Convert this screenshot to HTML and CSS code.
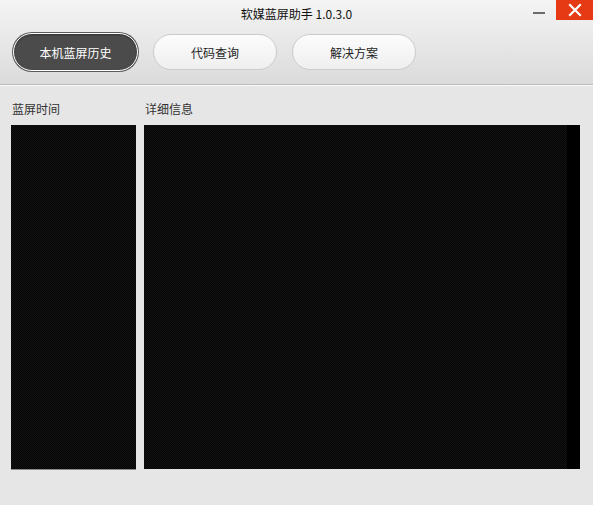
FILE: index.html
```html
<!DOCTYPE html>
<html lang="zh">
<head>
<meta charset="utf-8">
<title>软媒蓝屏助手</title>
<link rel="stylesheet" href="styles.css">
</head>
<body>
<div class="window">
  <header class="header">
    <div class="titlebar">
      <div class="title">软媒蓝屏助手 1.0.3.0</div>
      <div class="controls">
        <div class="min"><span class="dash"></span></div>
        <div class="close">
          <svg width="14" height="14" viewBox="0 0 14 14"><path d="M2 2 L12 12 M12 2 L2 12" stroke="#fff" stroke-width="2.2" stroke-linecap="square"/></svg>
        </div>
      </div>
    </div>
    <nav class="tabs">
      <div class="tab active">本机蓝屏历史</div>
      <div class="tab">代码查询</div>
      <div class="tab">解决方案</div>
    </nav>
  </header>
  <main class="content">
    <section class="col col-left">
      <div class="label">蓝屏时间</div>
      <div class="panel panel-left"></div>
    </section>
    <section class="col col-right">
      <div class="label">详细信息</div>
      <div class="panel panel-right"><div class="scroll"></div></div>
    </section>
  </main>
</div>
</body>
</html>
```

FILE: styles.css
```css
* { box-sizing: border-box; }
html, body { margin: 0; padding: 0; }
body {
  font-family: "Noto Sans CJK SC", "Liberation Sans", sans-serif;
  font-size: 12px;
  background: #e6e6e6;
}
.window {
  width: 593px;
  height: 505px;
  display: flex;
  flex-direction: column;
  background: #e6e6e6;
  overflow: hidden;
}
.header {
  height: 85px;
  flex: none;
  background: linear-gradient(#f4f4f4, #dbdbdb);
  border-bottom: 1px solid #bdbdbd;
  box-shadow: 0 1px 0 #f8f8f8;
  display: flex;
  flex-direction: column;
}
.titlebar {
  height: 22px;
  flex: none;
  display: flex;
  justify-content: center;
  align-items: center;
  position: relative;
}
.title {
  color: #111;
  font-size: 12px;
  line-height: 14px;
  padding-top: 5px;
}
.controls {
  position: absolute;
  top: 0;
  right: 0;
  display: flex;
}
.min {
  width: 34px;
  height: 20px;
  display: flex;
  align-items: center;
  justify-content: center;
  padding-top: 5px;
}
.dash {
  width: 12px;
  height: 2px;
  background: #6a6a6a;
}
.close {
  width: 37px;
  height: 20px;
  background: #e53a14;
  display: flex;
  align-items: center;
  justify-content: center;
}
.tabs {
  display: flex;
  gap: 15px;
  margin: 11px 0 0 13px;
  height: 38px;
  align-items: center;
}
.tab {
  width: 124px;
  height: 36px;
  border-radius: 18px;
  border: 1px solid #cbcbcb;
  background: linear-gradient(#fcfcfc, #efefef);
  color: #222;
  display: flex;
  align-items: center;
  justify-content: center;
  font-size: 12px;
}
.tab.active {
  width: 125px;
  height: 38px;
  border-radius: 19px;
  background: #4b4b4b;
  border: 1px solid #fff;
  box-shadow: 0 0 0 1px #5a5a5a, inset 0 1px 2px rgba(0,0,0,0.4);
  color: #fff;
}
.content {
  flex: 1;
  display: flex;
  gap: 8px;
  padding: 15px 0 0 11px;
}
.col {
  display: flex;
  flex-direction: column;
}
.label {
  color: #333;
  font-size: 12px;
  line-height: 18px;
  padding-left: 1px;
  height: 25px;
  flex: none;
}
.panel {
  flex: none;
  height: 345px;
  background: repeating-conic-gradient(#141414 0 25%, #040404 0 50%) 0 0 / 2px 2px;
}
.panel-left {
  width: 125px;
  border-bottom: 1px solid #8a8a8a;
}
.panel-right {
  width: 436px;
  height: 344px;
  display: flex;
  justify-content: flex-end;
}
.scroll {
  width: 13px;
  background: #000;
}
```
